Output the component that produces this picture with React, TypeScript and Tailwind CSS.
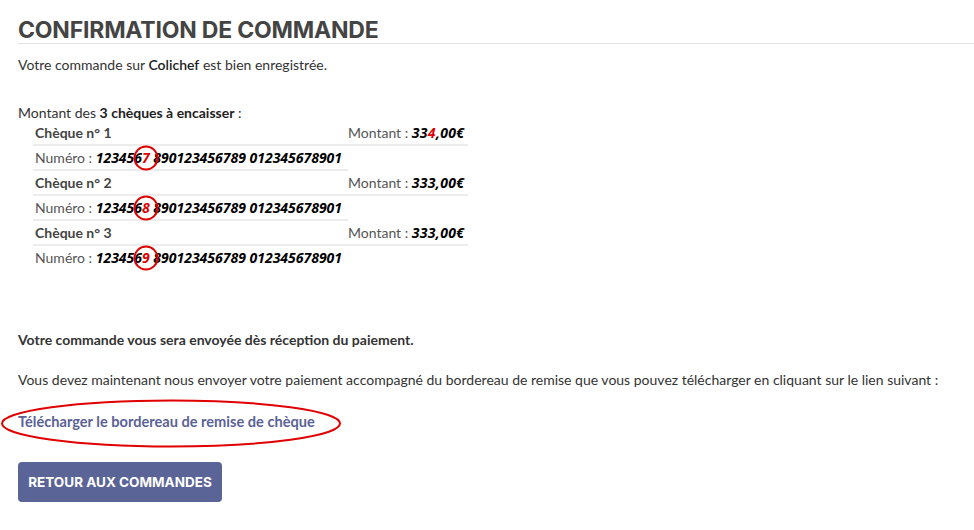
import React from "react";

type Cheque = {
  label: string;
  amount: React.ReactNode;
  digit: string;
};

const cheques: Cheque[] = [
  {
    label: "Chèque n° 1",
    amount: (
      <>
        33<span className="text-[#e00000]">4</span>,00€
      </>
    ),
    digit: "7",
  },
  { label: "Chèque n° 2", amount: "333,00€", digit: "8" },
  { label: "Chèque n° 3", amount: "333,00€", digit: "9" },
];

const lato = { fontFamily: "Lato, 'Open Sans', sans-serif" };
const openSans = { fontFamily: "'Open Sans', 'DejaVu Sans', sans-serif" };
const heading = { fontFamily: "Inter, 'Open Sans', sans-serif" };

function Numero({ digit }: { digit: string }) {
  return (
    <span className="font-bold italic text-[14px] leading-[17px] text-black" style={openSans}>
      123456
      <span className="relative text-[#e00000]">
        {digit}
        <span className="absolute left-1/2 top-1/2 w-[25px] h-[25px] -translate-x-1/2 -translate-y-1/2 rounded-full border-2 border-[#e00000]" />
      </span>{" "}
      890123456789 012345678901
    </span>
  );
}

export default function App() {
  return (
    <div className="relative w-[974px] h-[530px] bg-white overflow-hidden text-[14px] text-[#333]" style={lato}>
      {/* Header */}
      <div className="pt-[18px] pl-[18px]">
        <h1
          className="text-[23px] leading-[24px] font-bold text-[#444] pb-[1px] border-b border-[#e2e2e2] tracking-[-0.2px]"
          style={heading}
        >
          CONFIRMATION DE COMMANDE
        </h1>
      </div>

      <div className="pl-[18px]">
        <p className="mt-[11px] leading-[20px]">
          Votre commande sur <span className="font-semibold text-[#222]">Colichef</span> est bien enregistrée.
        </p>

        <p className="mt-[29px] leading-[17px]">
          Montant des <span className="font-bold text-[#222]">3 chèques à encaisser</span> :
        </p>

        {/* Cheques table */}
        <table className="ml-[15px] border-collapse">
          <tbody>
            {cheques.map((c, i) => (
              <React.Fragment key={c.label}>
                <tr>
                  <td className="w-[315px] pl-[2px] pt-[3px] pb-[3px] leading-[17px] font-bold text-[#444] border-b-2 border-[#ececec]">
                    {c.label}
                  </td>
                  <td className="w-[120px] pt-[3px] pb-[3px] leading-[17px] text-[#555] border-b-2 border-[#ececec] whitespace-nowrap">
                    Montant :{" "}
                    <span className="font-bold italic text-[14px] leading-[17px] tracking-[0.3px] text-black" style={openSans}>
                      {c.amount}
                    </span>
                  </td>
                </tr>
                <tr>
                  <td
                    className={`pl-[2px] pt-[3px] pb-[3px] leading-[17px] text-[#555] whitespace-nowrap ${
                      i < cheques.length - 1 ? "border-b-2 border-[#ececec]" : ""
                    }`}
                  >
                    Numéro : <Numero digit={c.digit} />
                  </td>
                  <td />
                </tr>
              </React.Fragment>
            ))}
          </tbody>
        </table>

        <p className="mt-[61px] leading-[20px] font-bold text-[#333]">
          Votre commande vous sera envoyée dès réception du paiement.
        </p>

        <p className="mt-[20px] leading-[20px] text-[#333]">
          Vous devez maintenant nous envoyer votre paiement accompagné du bordereau de remise que vous pouvez télécharger en cliquant sur le lien suivant :
        </p>

        <div className="relative mt-[22px] leading-[20px]">
          <a href="#" className="font-bold text-[14.6px] text-[#5b6396]">
            Télécharger le bordereau de remise de chèque
          </a>
          <svg
            className="absolute left-[-18px] top-[-13px] pointer-events-none"
            width="344"
            height="50"
            viewBox="0 0 344 50"
          >
            <ellipse cx="171" cy="24.5" rx="169" ry="23" fill="none" stroke="#e00000" strokeWidth="2" />
          </svg>
        </div>

        <button
          className="mt-[30px] w-[204px] h-[40px] rounded-[4px] bg-[#5b6496] text-white text-[13.5px] font-bold"
          style={heading}
        >
          RETOUR AUX COMMANDES
        </button>
      </div>
    </div>
  );
}
